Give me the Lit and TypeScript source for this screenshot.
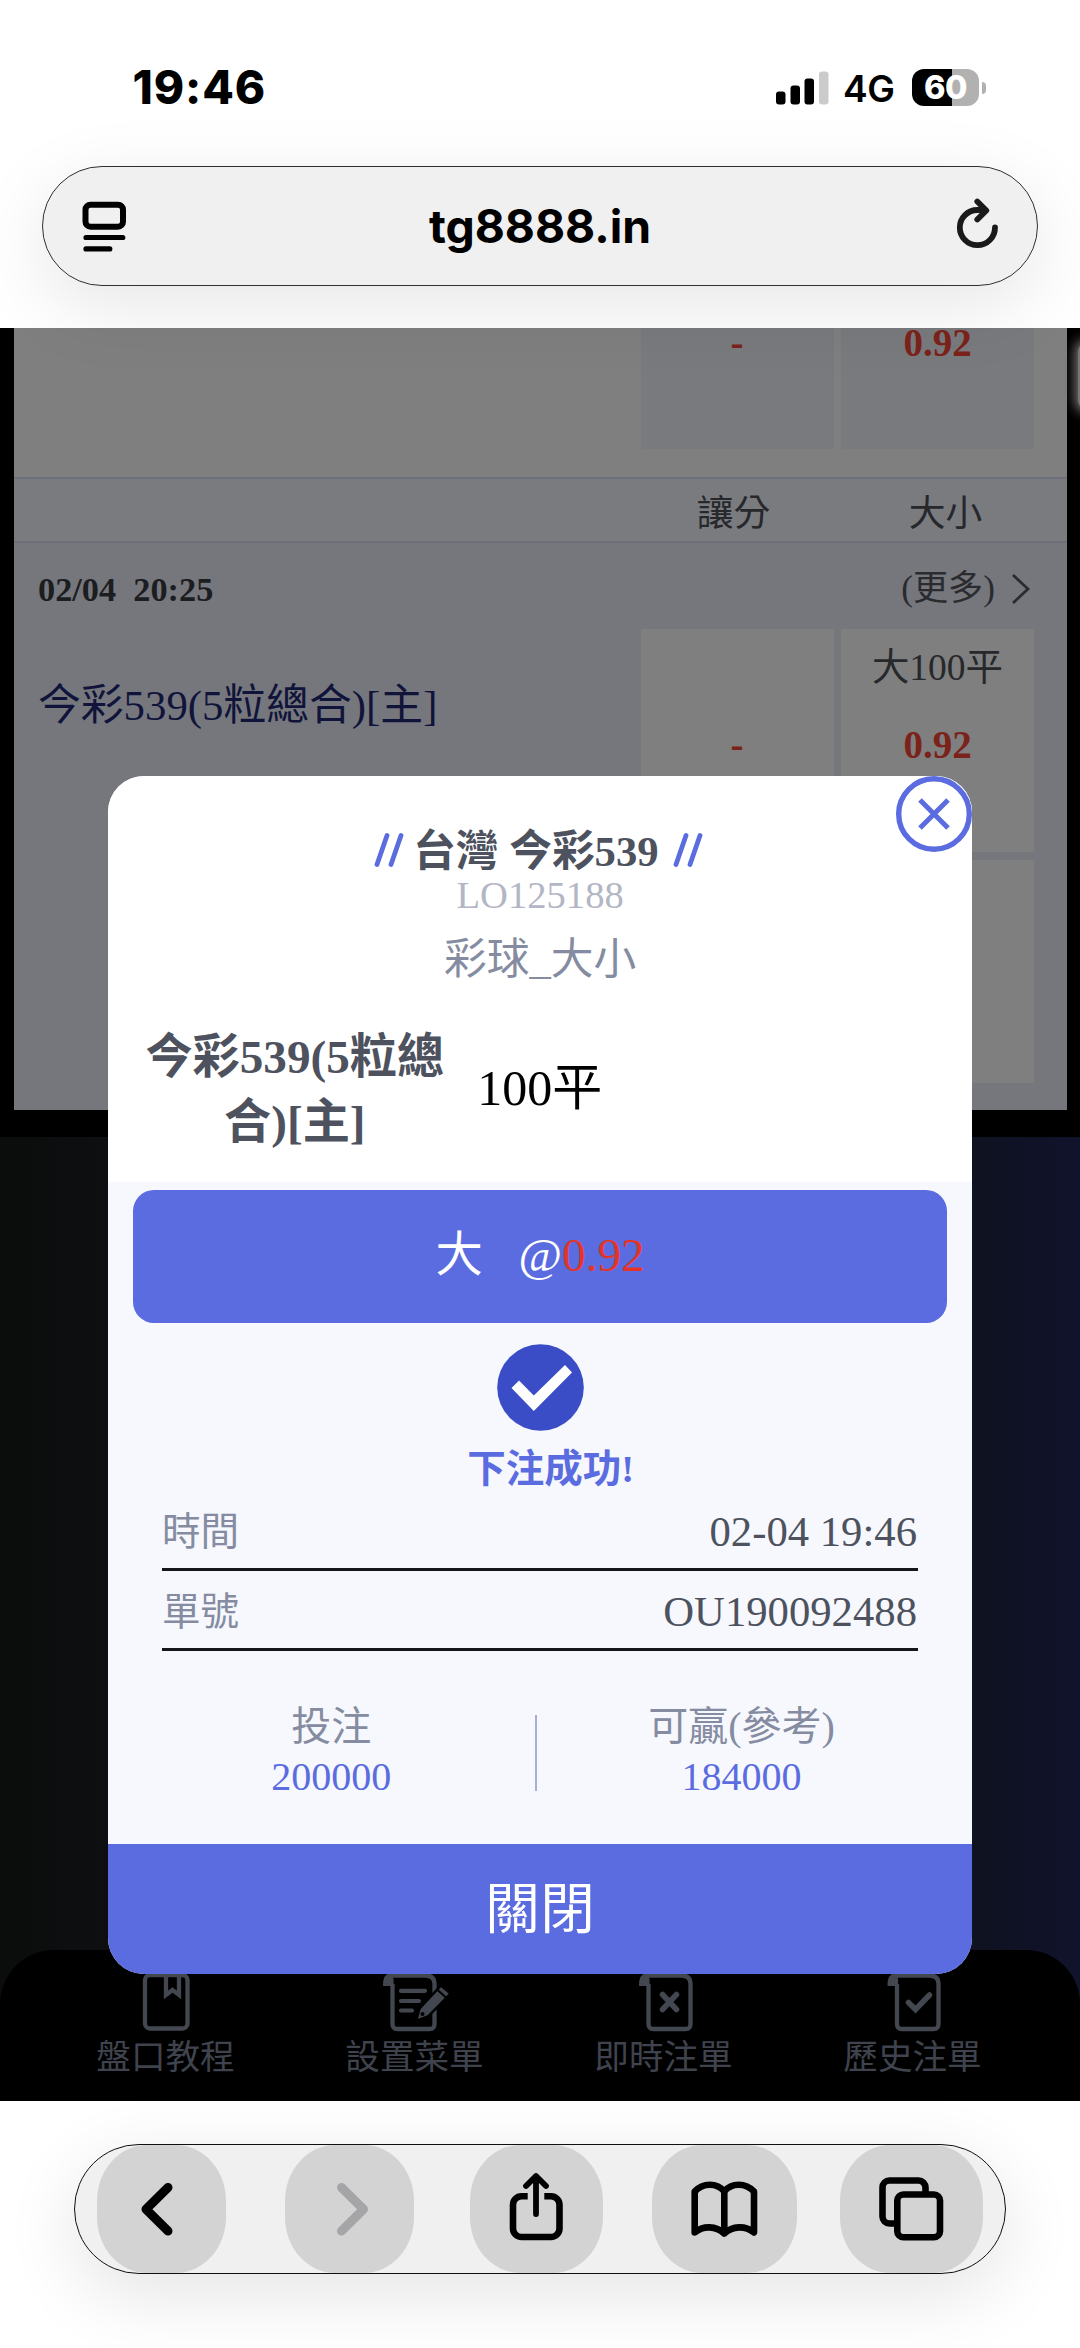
import { LitElement, html, css, svg } from "lit";
import { customElement, property } from "lit/decorators.js";

/** iOS status bar and address pill. */
@customElement("browser-top")
class BrowserTop extends LitElement {
  static styles = css`
    :host { display: block; position: relative; z-index: 1; height: 328px; font-family: Inter, "Liberation Sans", sans-serif; color: #000; }
    .status { display: flex; align-items: center; height: 165.5px; box-sizing: border-box; padding: 48px 94px 38px 132.5px; }
    .time { font-size: 46px; font-weight: 800; line-height: 79px; letter-spacing: 0.9px; flex: 1; }
    .bars { display: block; width: 54px; height: 34px; }
    .net { font-size: 37px; font-weight: 600; margin: 1px 0 0 13.5px; letter-spacing: -0.3px; width: 56px; }
    .batt { display: flex; align-items: center; margin-left: 13px; gap: 3px; }
    .cell { width: 67px; height: 37px; border-radius: 12px; background: linear-gradient(90deg, #000 60%, #b1b1b1 60%); color: #fff; font-size: 32.5px; font-weight: 800; line-height: 38px; text-align: center; letter-spacing: -0.5px; }
    .tip { width: 4px; height: 12px; border-radius: 0 6px 6px 0; background: #b1b1b1; }
    .pill { display: flex; align-items: center; box-sizing: border-box; width: 996px; height: 120px; margin-left: 42px; border: 1.5px solid #303030; border-radius: 60px; background: #f0f0f0; box-shadow: 0 20px 75px rgba(0, 0, 0, 0.1); padding: 0 36px; }
    .icon { display: block; width: 50px; height: 60px; }
    .url { flex: 1; text-align: center; font-size: 46.3px; font-weight: 660; line-height: 60px; }
  `;
  render() {
    return html`
      <div class="status">
        <div class="time">19:46</div>
        <svg class="bars" viewBox="774.5 70.500 54 34">
          <rect x="774.5" y="91" width="9.5" height="13" rx="3" />
          <rect x="789" y="85" width="9.5" height="19" rx="3" />
          <rect x="803" y="78" width="9.5" height="26" rx="3" />
          <rect x="817.500" y="71" width="9.500" height="33" rx="3" fill="#cbcbcb" />
        </svg>
        <div class="net">4G</div>
        <div class="batt"><div class="cell">60</div><div class="tip"></div></div>
      </div>
      <div class="pill">
        <svg class="icon" viewBox="79.500 195.500 50 60" fill="none" stroke="#000" stroke-linecap="round">
          <rect x="86" y="204.200" width="37.500" height="22" rx="5" stroke-width="6" />
          <path d="M86.500 237H123.300M86.500 248.400H110.300" stroke-width="5.200" />
        </svg>
        <div class="url">tg8888.in</div>
        <svg class="icon" viewBox="951 195.500 50 60" fill="none" stroke="#1a1a1a" stroke-width="5.800" stroke-linecap="round" stroke-linejoin="round">
          <path d="M995 227A17.600 17.600 0 1 1 977.500 209.500H985" />
          <path d="M977.300 201L986.300 210L977.300 219" />
        </svg>
      </div>
    `;
  }
}

const ICONS = {
  back: svg`<path d="M168 2186.500L146 2208.300L168 2230" stroke-width="9" />`,
  forward: svg`<path d="M341.500 2186.500L363.500 2208.300L341.500 2230" stroke="#a5a5a7" stroke-width="9" />`,
  share: svg`<path d="M536 2213V2176M526 2185L536 2175L546 2185" stroke-width="5.800" /><path d="M527.700 2195.300H521.500A8.500 8.500 0 0 0 513 2203.800V2227.500A8.500 8.500 0 0 0 521.500 2236H551A8.500 8.500 0 0 0 559.500 2227.500V2203.800A8.500 8.500 0 0 0 551 2195.300H544.300" stroke-width="6.600" stroke-linecap="butt" />`,
  book: svg`<path d="M724.300 2190.500C717 2181.500 703 2181.500 694.700 2190.500V2231.500C703 2224.500 716 2224.500 724.300 2232.500C732.500 2224.500 745.500 2224.500 754 2231.500V2190.500C745.500 2181.500 731.500 2181.500 724.300 2190.500V2232.500" stroke-width="6.600" />`,
  tabs: svg`<path d="M895 2222.500H889.500A7 7 0 0 1 882.500 2215.500V2186.500A7 7 0 0 1 889.500 2179.500H918.500A7 7 0 0 1 925.500 2186.500V2192" stroke-width="6.600" stroke-linecap="butt" /><rect x="897.300" y="2193.500" width="42.700" height="42.700" rx="6" stroke-width="6.600" />`,
};

/** Safari bottom toolbar. */
@customElement("browser-bottom")
class BrowserBottom extends LitElement {
  static styles = css`
    :host { display: block; height: 247px; overflow: hidden; background: #fff; }
    .pill { display: flex; box-sizing: border-box; width: 932px; height: 130.500px; margin: 42.500px 0 0 74px; padding: 0 0 0 21.500px; border: 1.500px solid #101010; border-radius: 65px; background: #f0f0f0; box-shadow: 0 20px 75px rgba(0, 0, 0, 0.11); }
    .seg { display: block; height: 128px; border-radius: 50px / 56px; background: #d3d3d3; flex: none; }
    .back { width: 129px; margin-right: 59px; }
    .forward { width: 129px; margin-right: 56px; }
    .share { width: 133px; margin-right: 49px; }
    .book { width: 145px; margin-right: 43px; }
    .tabs { width: 143px; }
  `;
  private seg(name: keyof typeof ICONS, x: number, w: number) {
    return html`<svg class="seg ${name}" viewBox="${x} 2144 ${w} 128" fill="none" stroke="#000" stroke-linecap="round" stroke-linejoin="round">${ICONS[name]}</svg>`;
  }
  render() {
    return html`<div class="pill">
      ${this.seg("back", 97, 129)}${this.seg("forward", 285, 129)}${this.seg("share", 470, 133)}${this.seg("book", 652, 145)}${this.seg("tabs", 840, 143)}
    </div>`;
  }
}

const sheet = (left: number, right: number) => {
  const l = left + 2;
  const r = right - 2;
  return svg`<path d="M${l} 1984V2024Q${l} 2029 ${l + 5} 2029H${r - 5}Q${r} 2029 ${r} 2024V1984Q${r} 1975.500 ${r - 9} 1975.500H${l - 2}" />
    <path d="M${l + 1} 1986H${l - 9.5}Q${l - 10} 1974 ${l - 2} 1973Q${l + 2} 1976 ${l + 1} 1986Z" fill="#43474f" stroke="none" />`;
};

const NAV = [
  {
    label: "盤口教程",
    icon: svg`<rect x="29" y="1975" width="42.500" height="53.500" rx="5" /><path d="M50 1975V1995L56.500 1990L63 1995V1975" />`,
  },
  {
    label: "設置菜單",
    icon: svg`${sheet(25.5, 71.5)}<path d="M36 1990.800H60M36 2001H54M36 2010.500H47" stroke-linecap="round" stroke-width="4.200" />
      <path d="M51 2021L54.500 2008.500L76 1985.500L85.500 1993.500L63 2016.500Z" fill="#43474f" stroke="#000" stroke-width="2.500" /><path d="M72 1989.500L81.500 1998" stroke="#000" stroke-width="2" /><circle cx="57.500" cy="2014" r="2" fill="#000" stroke="none" />`,
  },
  {
    label: "即時注單",
    icon: svg`${sheet(32.5, 78.5)}<path d="M48.500 1994.500L62.500 2009.500M62.500 1994.500L48.500 2009.500" stroke-width="5.500" stroke-linecap="round" />`,
  },
  {
    label: "歷史注單",
    icon: svg`${sheet(32, 77.5)}<path d="M45.500 2002.500L52.500 2009.500L66.500 1995" stroke-width="5.500" stroke-linecap="round" />`,
  },
];

/** Dimmed betting list behind the dialog. */
@customElement("odds-page")
class OddsPage extends LitElement {
  static styles = css`
    :host { display: flex; flex-direction: column; height: 100%; position: relative; font-family: "Liberation Serif", "Noto Sans CJK TC", serif; background: linear-gradient(90deg, #0b0d0c 0%, #0d0f12 12%, #0e0f14 50%, #0f1220 90%, #10132b 100%); }
    .frame { background: #000; padding: 0 13.500px 27px 13.500px; height: 809px; box-sizing: border-box; }
    .card { height: 782px; background: #76777d; display: flex; flex-direction: column; }
    .row { display: flex; justify-content: flex-end; gap: 7.500px; padding-right: 32.500px; }
    .previous { height: 148.500px; background: #7f7f7f; }
    .cell { width: 193px; height: 121px; background: #797a7e; display: flex; flex-direction: column; align-items: center; justify-content: flex-start; }
    .odd { color: #7b231a; font-weight: 700; font-size: 39px; line-height: 40px; }
    .previous .odd { margin-top: -5.500px; }
    .head { display: flex; justify-content: flex-end; height: 66px; box-sizing: border-box; border-top: 2px solid #6d6f7a; border-bottom: 2px solid #6d6f7a; background: #797b7f; color: #27282c; font-size: 36.800px; line-height: 69px; text-align: center; padding-right: 15px; }
    .col { width: 212px; }
    .meta { display: flex; align-items: center; height: 86.500px; padding: 6px 34.500px 0 24.500px; box-sizing: border-box; }
    .when { flex: 1; font-size: 34.300px; font-weight: 700; line-height: 80px; color: #1c1d20; white-space: pre; }
    .more { font-size: 35.200px; line-height: 81px; color: #2a2b2f; }
    .chev { width: 22px; height: 34px; margin-left: 15px; display: block; }
    .match { display: flex; padding: 0 32.500px 0 24.500px; }
    .name { flex: 1; color: #10143a; font-size: 42.800px; line-height: 60px; padding-top: 46.500px; }
    .stack { display: grid; grid-template-columns: 193px 193px; gap: 8px 7.500px; }
    .stack .cell { background: #7f7f7f; height: 223px; }
    .line { font-size: 37.500px; line-height: 40px; height: 40px; padding-top: 19px; color: #27282c; }
    .stack .odd { margin-top: 35px; line-height: 43px; }
    .edge { position: absolute; left: 1078px; top: 14px; width: 20px; height: 68px; border-radius: 10px; box-shadow: 0 0 12px 3px #777; background: #777; }
    .spacer { flex: 1; }
    .nav { display: grid; grid-template-columns: repeat(4, 249px); height: 151px; padding: 0 41px; box-sizing: border-box; border-radius: 54px 54px 0 0; background: #000; }
    .item { display: flex; flex-direction: column; align-items: center; color: #3f434d; font-size: 34.600px; line-height: 47px; }
    .glyph { width: 100px; height: 84px; display: block; }
  `;
  render() {
    return html`
      <div class="frame">
        <div class="card">
          <div class="row previous">
            <div class="cell"><div class="odd">-</div></div>
            <div class="cell"><div class="odd">0.92</div></div>
          </div>
          <div class="head"><div class="col">讓分</div><div class="col">大小</div></div>
          <div class="meta">
            <div class="when">02/04  20:25</div>
            <div class="more">(更多)</div>
            <svg class="chev" viewBox="0 0 22 34"><path d="M3 3L18 17L3 31" fill="none" stroke="#2a2b2f" stroke-width="2.800" /></svg>
          </div>
          <div class="match">
            <div class="name">今彩539(5粒總合)[主]</div>
            <div class="stack">
              <div class="cell"><div class="line"></div><div class="odd">-</div></div>
              <div class="cell"><div class="line">大100平</div><div class="odd">0.92</div></div>
              <div class="cell"></div>
              <div class="cell"></div>
            </div>
          </div>
        </div>
      </div>
      <div class="spacer"></div>
      <div class="nav">
        ${NAV.map(
          (n) => html`<div class="item">
            <svg class="glyph" viewBox="0 1950 100 84" fill="none" stroke="#43474f" stroke-width="4.300">${n.icon}</svg>
            ${n.label}
          </div>`
        )}
      </div>
      <div class="edge"></div>
    `;
  }
}

/** Bet confirmation dialog. */
@customElement("bet-dialog")
class BetDialog extends LitElement {
  @property() stake = "200000";
  @property() win = "184000";
  static styles = css`
    :host { display: block; position: absolute; left: 108.300px; top: 448px; width: 863.700px; height: 1198px; border-radius: 36px; overflow: hidden; background: #f6f8fd; font-family: "Liberation Serif", "Noto Sans CJK TC", serif; text-align: center; }
    .close { position: absolute; right: 0; top: 0; width: 76px; height: 76px; }
    .top { height: 405.500px; box-sizing: border-box; background: #fff; padding-top: 47.500px; }
    .title { display: flex; justify-content: center; align-items: center; height: 56px; padding-right: 4px; font-size: 42.700px; font-weight: 700; line-height: 56px; color: #4d525e; }
    .name { margin: 0 14px 0 9.500px; }
    .slashes { width: 30px; height: 34px; display: block; position: relative; top: -2px; }
    .code { color: #b3b6c4; font-size: 38.600px; line-height: 40px; margin-top: -4.500px; }
    .kind { color: #858ca1; font-size: 42.700px; line-height: 80px; padding-top: 5px; }
    .teams { display: flex; align-items: center; padding: 24.500px 0 0 36.500px; }
    .team { width: 300px; font-size: 47.200px; font-weight: 700; line-height: 65px; color: #4d525e; }
    .total { width: 190px; font-size: 50px; line-height: 61px; padding-bottom: 3px; color: #000; }
    .pick { margin: 8px 24.500px 0 24.500px; height: 133.500px; border-radius: 21px; background: #5b6ce0; color: #fff; font-size: 47.300px; line-height: 130px; white-space: pre; }
    .side { margin-right: 12px; }
    .price { color: #e43428; }
    .tick { display: block; width: 87px; height: 87px; margin: 21px auto 0; }
    .ok { height: 76.500px; box-sizing: border-box; padding: 1px 0 0 21px; color: #5b6ce0; font-weight: 700; font-size: 38.500px; line-height: 75px; }
    .field { display: flex; justify-content: space-between; align-items: flex-end; margin: 0 54px 0 53.700px; height: 80.500px; box-sizing: border-box; border-bottom: 3px solid #15161a; color: #858ca1; font-size: 38.500px; }
    .field.first { height: 63px; }
    .key { line-height: 74px; height: 73px; }
    .val { line-height: 72px; height: 72px; color: #4d525e; font-size: 42.700px; padding-right: 1px; }
    .sums { display: flex; align-items: center; height: 193px; }
    .sum { box-sizing: border-box; font-size: 40px; line-height: 50px; color: #858ca1; }
    .lefthalf { width: 427px; padding: 9.500px 0 0 19px; }
    .righthalf { width: 434px; padding: 9.500px 25.500px 0 0; }
    .num { color: #5b6ce0; }
    .rule { width: 2px; height: 76px; background: #a9afce; margin-top: 11px; }
    .done { height: 131px; background: #5b6ce0; color: #fff; font-size: 54.500px; line-height: 132px; letter-spacing: 0.5px; }
  `;
  private slashes() {
    return html`<svg class="slashes" viewBox="0 0 30 34"><path d="M3 31.500L13 2.500M17 31.500L27 2.500" fill="none" stroke="#5b6ce0" stroke-width="4.800" stroke-linecap="round" /></svg>`;
  }
  render() {
    return html`
      <div class="top">
        <div class="title">${this.slashes()}<span class="name">台灣 今彩539</span>${this.slashes()}</div>
        <div class="code">LO125188</div>
        <div class="kind">彩球_大小</div>
        <div class="teams">
          <div class="team">今彩539(5粒總<br />合)[主]</div>
          <div class="total">100平</div>
        </div>
      </div>
      <div class="pick"><span class="side">大</span>  <span>@</span><span class="price">0.92</span></div>
      <svg class="tick" viewBox="496.500 1344 87 87"><circle cx="540" cy="1387.500" r="43.300" fill="#3a4dc6" /><path d="M511 1388L518.500 1380.500L533.300 1395.500L564.500 1365L571.500 1372.500L533.300 1411Z" fill="#fff" /></svg>
      <div class="ok">下注成功!</div>
      <div class="field first"><span class="key">時間</span><span class="val">02-04 19:46</span></div>
      <div class="field"><span class="key">單號</span><span class="val">OU190092488</span></div>
      <div class="sums">
        <div class="lefthalf sum">投注<div class="num">${this.stake}</div></div>
        <div class="rule"></div>
        <div class="righthalf sum">可贏(參考)<div class="num">${this.win}</div></div>
      </div>
      <div class="done">關閉</div>
      <svg class="close" viewBox="0 0 76 76"><circle cx="38" cy="38" r="35.300" fill="#fff" stroke="#5b6ce0" stroke-width="5.400" /><path d="M24 24L52 52M52 24L24 52" stroke="#5b6ce0" stroke-width="5" /></svg>
    `;
  }
}

@customElement("app-root")
class AppRoot extends LitElement {
  static styles = css`
    :host { display: block; width: 1080px; height: 2348px; background: #fff; overflow: hidden; }
    .page { position: relative; height: 1773px; }
  `;
  render() {
    return html`
      <browser-top></browser-top>
      <div class="page"><odds-page></odds-page><bet-dialog></bet-dialog></div>
      <browser-bottom></browser-bottom>
    `;
  }
}
